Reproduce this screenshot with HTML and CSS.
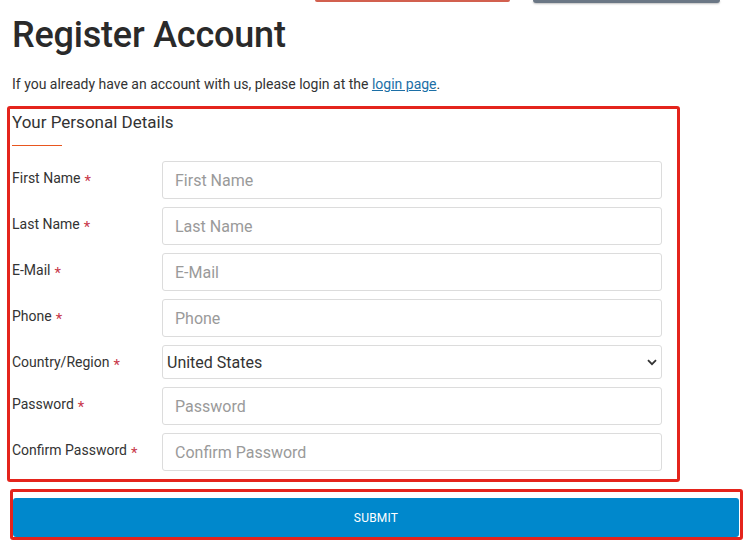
FILE: index.html
```html
<!DOCTYPE html>
<html lang="en">
<head>
<meta charset="utf-8">
<title>Register Account</title>
<link rel="stylesheet" href="styles.css">
</head>
<body>
<div class="topbar">
  <span class="tb-red"></span>
  <span class="tb-gray"></span>
</div>
<div class="page">
  <h1 class="title">Register Account</h1>
  <p class="intro">If you already have an account with us, please login at the <a href="#" class="link">login page</a>.</p>

  <form class="form">
    <div class="outline box-details">
      <div class="legend">Your Personal Details</div>
      <div class="rule"></div>
      <div class="row">
        <label class="label">First Name<span class="req">*</span></label>
        <input class="field" type="text" placeholder="First Name">
      </div>
      <div class="row">
        <label class="label">Last Name<span class="req">*</span></label>
        <input class="field" type="text" placeholder="Last Name">
      </div>
      <div class="row">
        <label class="label">E-Mail<span class="req">*</span></label>
        <input class="field" type="text" placeholder="E-Mail">
      </div>
      <div class="row">
        <label class="label">Phone<span class="req">*</span></label>
        <input class="field" type="text" placeholder="Phone">
      </div>
      <div class="row">
        <label class="label">Country/Region<span class="req">*</span></label>
        <div class="select-wrap">
          <select class="select">
            <option>United States</option>
          </select>
          <svg class="chev" width="10" height="7" viewBox="0 0 10 7"><path d="M1 1.2 L5 5.2 L9 1.2" fill="none" stroke="#333" stroke-width="1.8"/></svg>
        </div>
      </div>
      <div class="row">
        <label class="label">Password<span class="req">*</span></label>
        <input class="field" type="password" placeholder="Password">
      </div>
      <div class="row">
        <label class="label">Confirm Password<span class="req">*</span></label>
        <input class="field" type="password" placeholder="Confirm Password">
      </div>
    </div>
    <div class="outline box-submit">
      <button class="submit" type="button">SUBMIT</button>
    </div>
  </form>
</div>
</body>
</html>
```
FILE: styles.css
```css
* { box-sizing: border-box; }
html, body { margin: 0; padding: 0; background: #fff; }
body {
  font-family: Roboto, "Liberation Sans", Arial, sans-serif;
  color: #333;
  width: 753px;
  height: 558px;
  overflow: hidden;
}
.topbar {
  display: flex;
  height: 3px;
  padding-left: 315px;
  gap: 23px;
}
.tb-red {
  display: block;
  width: 195px;
  height: 2px;
  background: #d2604f;
  border-radius: 0 0 2px 2px;
}
.tb-gray {
  display: block;
  width: 187px;
  height: 3px;
  background: #6b7785;
  border-radius: 0 0 3px 3px;
  box-shadow: 0 1px 2px rgba(0,0,0,0.25);
}
.page { padding: 0 12px; }
.title {
  margin: 12px 0 0;
  font-size: 36px;
  line-height: 40px;
  font-weight: 500;
  color: #2a2a2a;
  letter-spacing: -0.2px;
}
.intro {
  margin: 19px 0 0;
  font-size: 14px;
  line-height: 20px;
  color: #333;
}
.link { color: #1c6fa6; text-decoration: underline; }
.form { margin: 0; }
.outline {
  border: 3px solid #e4241c;
  border-radius: 3px;
}
.box-details {
  margin: 12px 0 0 -5px;
  width: 673px;
  padding: 3px 0 0 2px;
}
.legend {
  font-size: 17px;
  line-height: 20px;
  color: #333;
}
.rule {
  width: 50px;
  height: 1px;
  background: #e8561f;
  margin: 13px 0 15px;
}
.row {
  display: grid;
  grid-template-columns: 150px 500px;
  margin-bottom: 8px;
}
.label {
  font-size: 14px;
  line-height: 20px;
  padding-top: 7px;
  color: #333;
}
.req {
  color: #c8384a;
  margin-left: 4px;
  font-size: 15px;
  position: relative;
  top: 3px;
}
.field {
  height: 38px;
  width: 500px;
  border: 1px solid #dcdcdc;
  border-radius: 3px;
  padding: 0 12px;
  font-family: Roboto, "Liberation Sans", Arial, sans-serif;
  font-size: 16px;
  color: #333;
  background: #fff;
  outline: none;
}
.field::placeholder { color: #9a9a9a; }
.select-wrap { position: relative; width: 500px; height: 34px; }
.select {
  -webkit-appearance: none;
  appearance: none;
  width: 500px;
  height: 34px;
  border: 1px solid #dcdcdc;
  border-radius: 3px;
  padding: 0 4px;
  font-family: Roboto, "Liberation Sans", Arial, sans-serif;
  font-size: 16px;
  color: #333;
  background: #fff;
  outline: none;
}
.chev {
  position: absolute;
  right: 5px;
  top: 14px;
  pointer-events: none;
}
.box-submit {
  margin: 7px 0 0 -2px;
  width: 733px;
  padding: 6px 1px 0 0;
}
.submit {
  display: block;
  width: 100%;
  height: 39px;
  border: none;
  border-radius: 3px;
  background: #0088cc;
  color: #fff;
  font-family: Roboto, "Liberation Sans", Arial, sans-serif;
  font-size: 12px;
  font-weight: 400;
  letter-spacing: 0.2px;
  cursor: pointer;
}
```
